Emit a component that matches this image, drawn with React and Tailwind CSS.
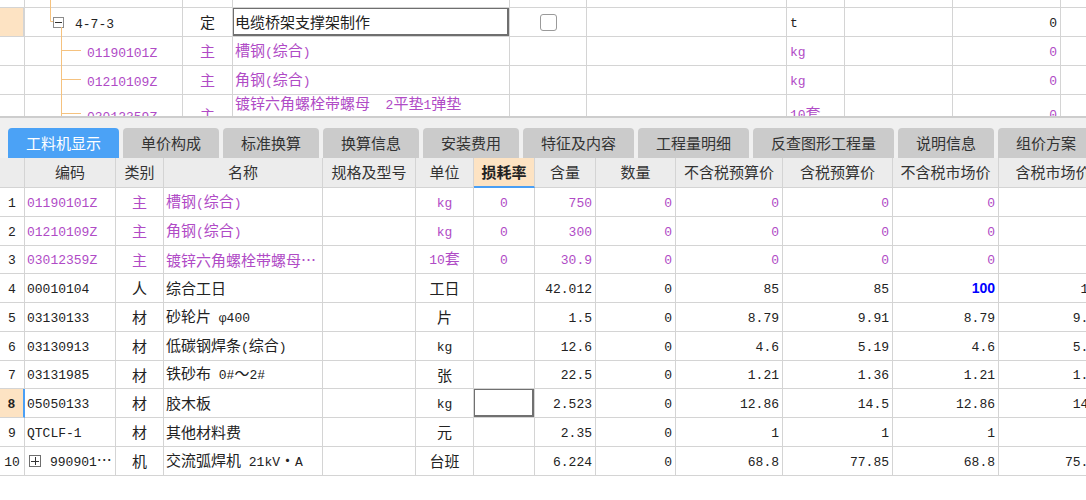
import React from 'react';

const MONO = "font-['Liberation_Mono','Noto_Sans_CJK_SC',monospace] text-[13px] whitespace-pre";
const CJK = "font-['Noto_Sans_CJK_SC','Liberation_Sans',sans-serif] text-[15px]";
const PURPLE = 'text-[#b04bc6]';
const LINE = 'border-[#d4d4d4]';

const isWide = (ch) => ch.charCodeAt(0) >= 0x2000 || ch === '·';

// ascii goes to the narrow mono face, han characters to the cjk face
function Txt({ s }) {
  if (!s) return null;
  const runs = [];
  for (const ch of s) {
    const w = isWide(ch);
    const last = runs[runs.length - 1];
    if (last && last.w === w) last.t += ch;
    else runs.push({ w, t: ch });
  }
  return (
    <span className="leading-[18px]">
      {runs.map((r, i) => (
        <span key={i} className={r.w ? CJK : MONO}>{r.t}</span>
      ))}
    </span>
  );
}

/* ---------- upper grid (quota tree) ---------- */

const TOP_W = ['w-[25px]', 'w-[158px]', 'w-[50px]', 'w-[277px]', 'w-[77px]', 'w-[200px]', 'w-[58px]', 'w-[108px]', 'w-[108px]', 'w-[40px]'];
const TOP_A = ['justify-center', 'justify-start', 'justify-center', 'justify-start pl-[2px]', 'justify-center', 'justify-start', 'justify-start pl-[3px]', 'justify-start', 'justify-end pr-[3px]', 'justify-start'];

const topRows = [
  { h: 'h-[8px]', v: [] },
  { h: 'h-[29px]', v: ['', '4-7-3', '定', '电缆桥架支撑架制作', '', '', 't', '', '0', ''], head: true },
  { h: 'h-[29px]', tone: PURPLE, v: ['', '01190101Z', '主', '槽钢(综合)', '', '', 'kg', '', '0', ''] },
  { h: 'h-[29px]', tone: PURPLE, v: ['', '01210109Z', '主', '角钢(综合)', '', '', 'kg', '', '0', ''] },
  { h: 'h-[40px]', tone: PURPLE, v: ['', '03012359Z', '主', '', '', '', '10套', '', '0', ''], wrap: true },
];

function TopGrid() {
  return (
    <div className="relative h-[118px] overflow-hidden border-b-2 border-[#cdcdcd] bg-white">
      {topRows.map((row, ri) => (
        <div key={ri} className={`flex w-max ${row.h}`}>
          {TOP_W.map((w, ci) => {
            const val = row.v[ci];
            let bg = '';
            let extra = `border-r ${LINE}`;
            if (ci === 0 && row.head) {
              bg = 'bg-[#fde3c3]';
              extra = 'border-r-2 border-[#3f8fe6]';
            }
            return (
              <div
                key={ci}
                className={`relative flex items-center shrink-0 overflow-hidden whitespace-nowrap border-b ${LINE} ${extra} ${w} ${TOP_A[ci]} ${bg} ${row.tone && ci !== 0 ? row.tone : 'text-[#222]'}`}
              >
                {ci === 1 && row.head && (
                  <>
                    <span className="ml-[28px] w-[11px] h-[11px] border border-[#8c8c8c] bg-white flex items-center justify-center shrink-0">
                      <span className="w-[7px] h-px bg-[#333]" />
                    </span>
                    <span className="ml-[11px]"><Txt s={val} /></span>
                  </>
                )}
                {ci === 1 && !row.head && val && <span className="pl-[62px]"><Txt s={val} /></span>}
                {ci === 3 && row.wrap && (
                  <div className="flex flex-col leading-[17px]">
                    <Txt s="镀锌六角螺栓带螺母  2平垫1弹垫" />
                    <Txt s="M12×100以内" />
                  </div>
                )}
                {ci === 3 && row.head && (
                  <div className="absolute -left-px -top-px right-0 bottom-0 border-2 border-[#6f6f6f]" />
                )}
                {ci === 4 && row.head && (
                  <span className="w-[17px] h-[17px] rounded-[3px] border border-[#9a9a9a] bg-white" />
                )}
                {ci !== 1 && !(ci === 3 && row.wrap) && <Txt s={val} />}
              </div>
            );
          })}
        </div>
      ))}
      {/* tree connectors */}
      <svg className="absolute left-0 top-0 pointer-events-none" width="100" height="118">
        <path d="M50.5 0 V21.5 H53 M61.5 27 V118 M61 50.5 H81 M61 79.5 H81 M61 113.5 H81" stroke="#f5c27f" strokeWidth="1" fill="none" />
      </svg>
    </div>
  );
}

/* ---------- tab strip ---------- */

const tabs = [
  ['工料机显示', 'w-[111px]'],
  ['单价构成', 'w-[96px]'],
  ['标准换算', 'w-[96px]'],
  ['换算信息', 'w-[96px]'],
  ['安装费用', 'w-[96px]'],
  ['特征及内容', 'w-[111px]'],
  ['工程量明细', 'w-[111px]'],
  ['反查图形工程量', 'w-[141px]'],
  ['说明信息', 'w-[96px]'],
  ['组价方案', 'w-[96px]'],
];

function Tabs() {
  return (
    <div className="flex items-end gap-[4px] h-[40px] pl-[8px] bg-[#f0f0f0] overflow-hidden">
      {tabs.map(([label, w], i) => (
        <div
          key={label}
          className={`${w} h-[30px] shrink-0 rounded-t-[4px] flex items-center justify-center ${CJK} ${
            i === 0 ? 'bg-[#4ba2f6] text-white' : 'bg-[#cbcbcb] text-[#333]'
          }`}
        >
          {label}
        </div>
      ))}
    </div>
  );
}

/* ---------- resource table ---------- */

const W = ['w-[25px]', 'w-[91px]', 'w-[48px]', 'w-[159px]', 'w-[93px]', 'w-[58px]', 'w-[61px]', 'w-[61px]', 'w-[80px]', 'w-[107px]', 'w-[110px]', 'w-[106px]', 'w-[109px]'];
const A = [
  'justify-center', 'justify-start pl-[2px]', 'justify-center', 'justify-start pl-[2px]', 'justify-center', 'justify-center',
  'justify-center', 'justify-end pr-[3px]', 'justify-end pr-[3px]', 'justify-end pr-[3px]', 'justify-end pr-[3px]', 'justify-end pr-[3px]', 'justify-end pr-[3px]',
];

const headers = ['', '编码', '类别', '名称', '规格及型号', '单位', '损耗率', '含量', '数量', '不含税预算价', '含税预算价', '不含税市场价', '含税市场价'];

const rows = [
  { h: 'h-[29px]', tone: PURPLE, v: ['1', '01190101Z', '主', '槽钢(综合)', '', 'kg', '0', '750', '0', '0', '0', '0', ''] },
  { h: 'h-[29px]', tone: PURPLE, v: ['2', '01210109Z', '主', '角钢(综合)', '', 'kg', '0', '300', '0', '0', '0', '0', ''] },
  { h: 'h-[28px]', tone: PURPLE, v: ['3', '03012359Z', '主', '镀锌六角螺栓带螺母…', '', '10套', '0', '30.9', '0', '0', '0', '0', ''] },
  { h: 'h-[29px]', v: ['4', '00010104', '人', '综合工日', '', '工日', '', '42.012', '0', '85', '85', '100', '100'], bold: 11 },
  { h: 'h-[29px]', v: ['5', '03130133', '材', '砂轮片 φ400', '', '片', '', '1.5', '0', '8.79', '9.91', '8.79', '9.91'] },
  { h: 'h-[29px]', v: ['6', '03130913', '材', '低碳钢焊条(综合)', '', 'kg', '', '12.6', '0', '4.6', '5.19', '4.6', '5.19'] },
  { h: 'h-[28px]', v: ['7', '03131985', '材', '铁砂布 0#～2#', '', '张', '', '22.5', '0', '1.21', '1.36', '1.21', '1.36'] },
  { h: 'h-[29px]', v: ['8', '05050133', '材', '胶木板', '', 'kg', '', '2.523', '0', '12.86', '14.5', '12.86', '14.5'], cur: true },
  { h: 'h-[29px]', v: ['9', 'QTCLF-1', '材', '其他材料费', '', '元', '', '2.35', '0', '1', '1', '1', '1'] },
  { h: 'h-[29px]', v: ['10', '990901…', '机', '交流弧焊机 21kV·A', '', '台班', '', '6.224', '0', '68.8', '77.85', '68.8', '75.66'], plus: true },
];

function Table() {
  return (
    <div className="bg-white">
      <div className="flex w-max h-[30px] bg-[#ececec]">
        {headers.map((h, i) => (
          <div
            key={i}
            className={`flex items-center justify-center shrink-0 overflow-hidden whitespace-nowrap border-r ${LINE} ${W[i]} ${
              i === 6 ? 'border-b-2 border-b-[#4a9ff5] bg-[#fde3c3] font-bold text-[#222]' : `border-b text-[#333]`
            } ${CJK}`}
          >
            {h}
          </div>
        ))}
      </div>
      {rows.map((row, ri) => (
        <div key={ri} className={`flex w-max ${row.h}`}>
          {row.v.map((val, ci) => {
            const numCell = ci === 0;
            const curNum = numCell && row.cur;
            return (
              <div
                key={ci}
                className={`relative flex items-center shrink-0 overflow-hidden whitespace-nowrap border-b ${LINE} ${W[ci]} ${A[ci]} ${
                  curNum ? 'border-r-2 border-r-[#4a9ff5] bg-[#fde3c3] font-bold' : 'border-r'
                } ${row.tone && !numCell ? row.tone : 'text-[#222]'}`}
              >
                {ci === 1 && row.plus && (
                  <span className="ml-[2px] mr-[9px] w-[12px] h-[12px] border border-[#6e6e6e] relative shrink-0 flex items-center justify-center">
                    <span className="absolute w-[8px] h-px bg-[#333]" />
                    <span className="absolute w-px h-[8px] bg-[#333]" />
                  </span>
                )}
                {row.bold === ci ? (
                  <span className="font-['Liberation_Sans',sans-serif] font-bold text-[14px] text-[#0000ff]">{val}</span>
                ) : (
                  <Txt s={val} />
                )}
                {ci === 6 && row.cur && (
                  <div className="absolute -left-px -top-px right-0 bottom-0 border-2 border-[#707070]" />
                )}
              </div>
            );
          })}
        </div>
      ))}
    </div>
  );
}

export default function App() {
  return (
    <div className="w-[1086px] h-[500px] overflow-hidden bg-white">
      <TopGrid />
      <Tabs />
      <Table />
    </div>
  );
}
